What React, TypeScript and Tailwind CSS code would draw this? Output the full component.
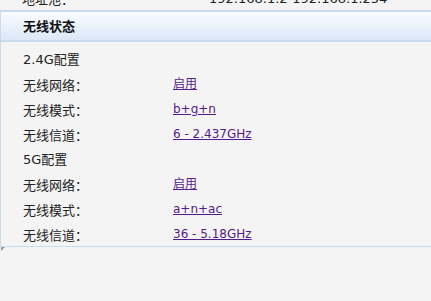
const font = { fontFamily: '"DejaVu Sans", "Noto Sans CJK SC", sans-serif' };
const cjk = { fontFamily: '"Noto Sans CJK SC", "DejaVu Sans", sans-serif' };

const sections = [
  {
    title: "2.4G配置",
    rows: [
      ["无线网络：", "启用"],
      ["无线模式：", "b+g+n"],
      ["无线信道：", "6 - 2.437GHz"],
    ],
  },
  {
    title: "5G配置",
    rows: [
      ["无线网络：", "启用"],
      ["无线模式：", "a+n+ac"],
      ["无线信道：", "36 - 5.18GHz"],
    ],
  },
];

export default function App() {
  return (
    <div className="w-[431px] h-[301px] bg-[#f4f4f4] overflow-hidden text-[12px] text-[#222]" style={font}>
      {/* previous block, cut off */}
      <div className="h-[10px] overflow-hidden">
        <div className="flex h-[25px] leading-[25px] -mt-[14px] pl-[22px]">
          <span className="w-[187px] text-[13px]" style={cjk}>地址池：</span>
          <span className="text-[13px]">192.168.1.2-192.168.1.254</span>
        </div>
      </div>

      <div className="relative border-l border-b border-[#c9dcef]">
        <div className="h-[32px] flex items-center pl-[22px] border-t-2 border-b-2 border-[#c9dcef] bg-gradient-to-b from-[#fafcff] to-[#dbe8f8] font-bold text-[13px] text-[#111]" style={cjk}>
          无线状态
        </div>
        <div className="pt-[4px]">
          {sections.map((s) => (
            <div key={s.title}>
              <div className="h-[25px] leading-[27px] pl-[22px] text-[13px]">{s.title}</div>
              {s.rows.map(([label, value]) => (
                <div key={label} className="flex h-[25px] leading-[27px] pl-[22px]">
                  <span className="w-[150px] text-[13px]" style={cjk}>{label}</span>
                  <a href="#" className="text-[#551a8b] underline">
                    {value}
                  </a>
                </div>
              ))}
            </div>
          ))}
        </div>
        <div className="absolute left-0 -bottom-[5px] w-[4px] h-[4px] bg-[#9a9a9a] [clip-path:polygon(0_0,100%_0,0_100%)]" />
      </div>
    </div>
  );
}
